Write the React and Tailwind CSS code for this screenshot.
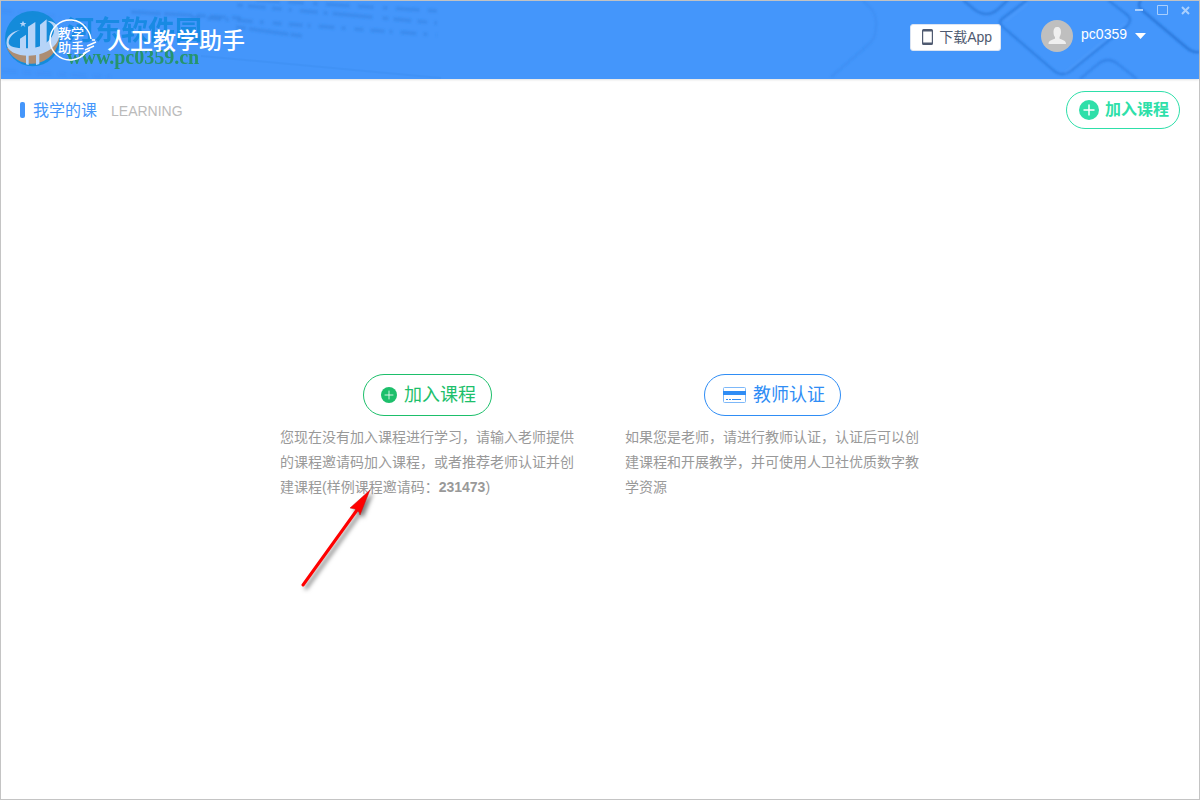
import React from 'react';

function HeaderBackdrop() {
  return (
    <>
      <svg className="absolute left-0 top-0" width="570" height="78" viewBox="0 0 570 78" fill="none" aria-hidden="true">
        <defs>
          <filter id="soft" x="-5%" y="-50%" width="110%" height="200%">
            <feGaussianBlur stdDeviation="1.2" />
          </filter>
        </defs>
        <g stroke="#2f7ddd" strokeOpacity="0.4" strokeWidth="4" filter="url(#soft)">
          <path d="M130 11 L240 17" strokeDasharray="30 3 28 5 9 4 16 6" />
          <path d="M190 16 L436 34" strokeDasharray="9 7 14 5 3 8 16 7 4 9" />
          <path d="M236 4 L436 22" strokeDasharray="6 5 18 6 10 7 3 8 18 6 4 5 40 10" />
          <path d="M235 26 L301 35" strokeDasharray="10 3 40 2 12 4" />
          <path d="M255 -1 L436 10" strokeDasharray="24 8 16 9 5 8" />
          <path d="M0 10 L60 16" strokeDasharray="12 6 20 4" strokeOpacity="0.12" />
          <path d="M0 70 L110 76" strokeDasharray="16 6 9 4" strokeOpacity="0.12" />
        </g>
        <path d="M200 55 L440 77" stroke="#2f7ddd" strokeOpacity="0.15" strokeWidth="2" />
      </svg>
      <svg className="absolute right-0 top-0" width="400" height="78" viewBox="-60 0 400 78" fill="none" aria-hidden="true">
        <defs>
          <filter id="keys" x="-5%" y="-20%" width="110%" height="140%">
            <feGaussianBlur stdDeviation="0.8" />
          </filter>
        </defs>
        <g filter="url(#keys)">
          <path d="M3 -1 C15 8 18 16 17 26 C17 34 15 39 8 45 L-28 76" stroke="#3482e6" strokeOpacity="0.4" strokeWidth="2" />
          <path d="M104 -1 L116 9 Q128 17 138 9 L149 -1" stroke="#2a78da" strokeOpacity="0.8" strokeWidth="2.5" />
          <path d="M168 -1 L144 17 Q138 21 144 26 L194 69 Q203 77 213 69 L268 25 Q275 18 266 12 L249 -1" stroke="#2875d8" strokeOpacity="0.75" strokeWidth="2.2" />
          <path d="M168 3 L147 20 M206 72 L266 22" stroke="#66acff" strokeOpacity="0.5" strokeWidth="1" />
          <path d="M221 78 L239 63 Q249 55 259 63 L278 78" stroke="#2c7be0" strokeOpacity="0.7" strokeWidth="2.2" />
          <path d="M282 -1 Q277 5 284 10 L328 47 Q334 52 341 51" stroke="#2773d6" strokeOpacity="0.9" strokeWidth="2.4" />
        </g>
      </svg>
    </>
  );
}

function StampLogo() {
  return (
    <svg width="48" height="44" viewBox="0 0 48 44" fill="none" aria-hidden="true">
      <path d="M37 9 A20 20 0 1 0 37 33" stroke="#fff" strokeWidth="1.5" />
      <path d="M36 8 Q41 13 42 20 M43 21 H46 M38 27 L47 23 M36 31 L45 27 M34 35 L41 31" stroke="#fff" strokeWidth="1.5" />
      <g fill="#fff" fontFamily="'Noto Sans CJK SC', sans-serif" fontSize="13" fontWeight="500">
        <text x="9" y="19">教学</text>
        <text x="9" y="33">助手</text>
      </g>
    </svg>
  );
}

function Watermark() {
  return (
    <div className="pointer-events-none absolute left-1 top-2 flex gap-[2px] opacity-75">
      <svg width="60" height="60" viewBox="3 3 180 180" aria-hidden="true">
        <circle cx="86" cy="92" r="83" fill="#0588cf" />
        <path d="M10 120 Q60 140 100 135 Q145 120 165 72 A83 83 0 0 1 8 120 Z" fill="#cf8b48" />
        <path
          d="M8 100 C2 130 45 148 92 142 C140 134 168 105 166 75 C164 50 150 38 128 38 C148 46 154 60 148 78 C138 102 110 118 85 120 C45 123 14 118 14 104 C14 88 30 74 48 66 C22 70 8 86 8 100 Z"
          fill="#dce9f8"
        />
        <path d="M48 124 V92 L66 80 V124 Z M72 124 V56 L94 42 V124 Z M108 124 V50 L128 34 V120 Z" fill="#dce9f8" />
        <path d="M66 138 H74 V171 L66 169 Z M96 138 H106 V168 L96 171 Z" fill="#dce9f8" />
        <path d="M57 38 L60 45 L67 45 L61 50 L64 57 L57 52 L50 57 L53 50 L47 45 L54 45 Z" fill="#dce9f8" />
      </svg>
      <div className="flex flex-col pt-[6px]">
        <span className="h-8 text-[27px] font-bold leading-8 text-[#0a86dc]">河东软件园</span>
        <span className="h-5 font-['Liberation_Serif',serif] text-xl font-bold leading-5 text-[#1c9440]">www.pc0359.cn</span>
      </div>
    </div>
  );
}

function PlusCircle({ size, color, weight }) {
  return (
    <svg width={size} height={size} viewBox="0 0 20 20" aria-hidden="true">
      <circle cx="10" cy="10" r="10" fill={color} />
      <path d="M10 4.5 V15.5 M4.5 10 H15.5" stroke="#fff" strokeWidth={weight} />
    </svg>
  );
}

function WindowControls() {
  return (
    <div className="absolute right-2 top-1 flex gap-3 text-[#a9cffd]">
      <button aria-label="最小化">
        <svg width="11" height="11" viewBox="0 0 11 11" stroke="currentColor"><path d="M1 5 H9" strokeWidth="2" /></svg>
      </button>
      <button aria-label="最大化">
        <svg width="11" height="11" viewBox="0 0 11 11" fill="none" stroke="currentColor"><path d="M0.5 0.5 H10.5 V9.5 H0.5 Z" /></svg>
      </button>
      <button aria-label="关闭">
        <svg width="11" height="11" viewBox="0 0 11 11" stroke="currentColor"><path d="M2 2 L9 9 M9 2 L2 9" strokeWidth="2" /></svg>
      </button>
    </div>
  );
}

function Header() {
  return (
    <header className="relative flex h-[78px] items-center justify-between bg-[#4496fb] pl-12 pr-[53px] shadow-[0_1px_2px_rgba(0,0,0,0.12)]">
      <HeaderBackdrop />
      <Watermark />
      <div className="relative flex items-center gap-[10px] pt-[2px]">
        <StampLogo />
        <h1 className="text-[23px] font-medium leading-8 text-white">人卫教学助手</h1>
      </div>
      <div className="relative flex items-center gap-10 pb-2">
        <button className="mt-[2px] flex h-[27px] items-center gap-[6px] rounded-[3px] border border-[#dbe4f2] bg-white pl-[11px] pr-2 text-sm text-[#4f5a70]">
          <svg width="11" height="16" viewBox="0 0 11 16" fill="#4f5a70" aria-hidden="true">
            <path fillRule="evenodd" d="M1.5 0 H9.5 Q11 0 11 1.5 V14.5 Q11 16 9.5 16 H1.5 Q0 16 0 14.5 V1.5 Q0 0 1.5 0 Z M1.2 2.5 V13.5 H9.8 V2.5 Z" />
          </svg>
          下载App
        </button>
        <button className="flex items-center text-sm text-white">
          <svg width="32" height="32" viewBox="0 0 32 32" aria-hidden="true">
            <circle cx="16" cy="16" r="16" fill="#bfbfbf" />
            <path d="M16 7 C19 7 20 9 20 12 C20 14.500 19 16 18.500 17 V18.500 C20 20 25 19.500 25 24 H7.500 C7.500 19.500 12.500 20 14 18.500 V17 C13 16 12.500 14.500 12.500 12 C12.500 9 13.500 7 16 7 Z" fill="#efefef" />
          </svg>
          <span className="ml-2 pb-1">pc0359</span>
          <svg className="ml-2" width="11" height="6" viewBox="0 0 11 6" fill="#fff" aria-hidden="true">
            <path d="M0 0 H11 L5.500 6 Z" />
          </svg>
        </button>
      </div>
      <WindowControls />
    </header>
  );
}

function PointerArrow() {
  return (
    <svg className="absolute left-4 top-28 drop-shadow-[3px_3px_2px_rgba(0,0,0,0.5)]" width="84" height="110" viewBox="0 0 84 110" aria-hidden="true">
      <path d="M7 99 L61 24" stroke="#f00" strokeWidth="3" strokeLinecap="round" />
      <path d="M74 4 L54 22 L59 23 L63 26 L64 29 Z" fill="#f00" stroke="#c01010" strokeWidth="0.5" />
    </svg>
  );
}

function App() {
  return (
    <div className="flex min-h-screen flex-col border border-[#c4c4c4] bg-white font-['Liberation_Sans','Noto_Sans_CJK_SC',sans-serif]" lang="zh-CN">
      <Header />
      <div className="flex items-center justify-between px-[19px] pt-3">
        <div className="flex items-center">
          <span className="h-4 w-[5px] rounded-xs bg-[#4496fb]" />
          <h2 className="ml-2 pt-[2px] text-base text-[#4496fb]">我学的课</h2>
          <span className="ml-[14px] pt-[2px] text-sm text-[#bbbbbb]">LEARNING</span>
        </div>
        <button className="flex h-[38px] items-center gap-[6px] rounded-full border border-[#2edfa9] pl-3 pr-[10px] text-base font-bold text-[#2edfa9]">
          <PlusCircle size={20} color="#2edfa9" weight="1.5" />
          加入课程
        </button>
      </div>
      <main className="flex flex-1 items-center justify-center pb-[54px]">
        <div className="flex items-start gap-[50px] text-sm leading-[25px] text-[#999999]">
          <section className="relative flex w-[295px] flex-col items-center">
            <button className="flex h-[42px] items-center gap-[5px] rounded-full border border-[#1dbf6b] px-[15px] text-lg text-[#1dbf6b]">
              <span className="px-[2px]">
                <PlusCircle size={16} color="#1dbf6b" weight="1" />
              </span>
              加入课程
            </button>
            <p className="mt-[9px]">
              您现在没有加入课程进行学习，请输入老师提供的课程邀请码加入课程，或者推荐老师认证并创建课程(样例课程邀请码：<b>231473</b>)
            </p>
            <PointerArrow />
          </section>
          <section className="flex w-[295px] flex-col items-center">
            <button className="flex h-[42px] items-center gap-[6px] rounded-full border border-[#2f8df5] pl-[18px] pr-[15px] text-lg text-[#2f8df5]">
              <svg width="24" height="17" viewBox="0 0 24 17" fill="none" aria-hidden="true">
                <rect x="0.5" y="0.5" width="22" height="15" rx="1" stroke="#7db8f9" />
                <path d="M0 6 H23" stroke="#2f8df5" strokeWidth="4" />
                <path d="M3 12.500 H5 M6 12.500 H8 M9 12.500 H18" stroke="#2f8df5" />
              </svg>
              教师认证
            </button>
            <p className="mt-[9px]">
              如果您是老师，请进行教师认证，认证后可以创建课程和开展教学，并可使用人卫社优质数字教学资源
            </p>
          </section>
        </div>
      </main>
    </div>
  );
}

export default App;
